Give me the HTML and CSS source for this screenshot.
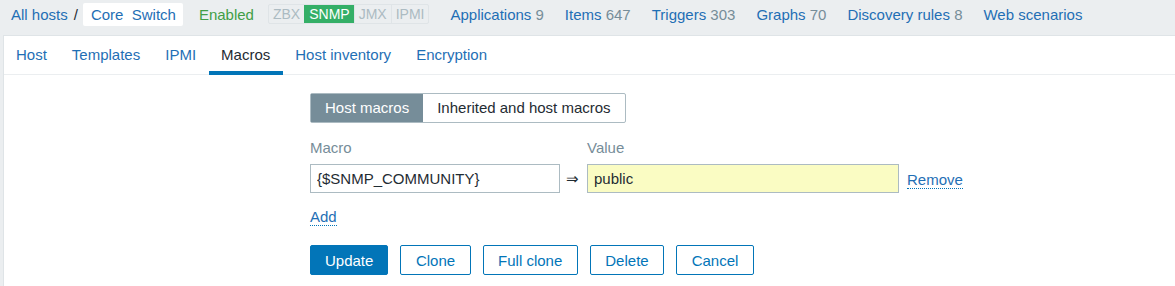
FILE: index.html
```html
<!DOCTYPE html>
<html lang="en">
<head>
    <meta charset="UTF-8">
    <title>Host macros</title>
    <link rel="stylesheet" href="styles.css">
</head>
<body>
    <div class="host-nav">
        <a class="crumb" href="#">All hosts</a>
        <span class="crumb-sep">/</span>
        <span class="crumb-current"><a href="#">Core&nbsp; Switch</a></span>
        <span class="status-enabled">Enabled</span>
        <span class="avail">
            <span class="avail-item">ZBX</span><span class="avail-item on">SNMP</span><span class="avail-item">JMX</span><span class="avail-item">IPMI</span>
        </span>
        <a class="nav-link" href="#">Applications <span class="count">9</span></a>
        <a class="nav-link" href="#">Items <span class="count">647</span></a>
        <a class="nav-link" href="#">Triggers <span class="count">303</span></a>
        <a class="nav-link" href="#">Graphs <span class="count">70</span></a>
        <a class="nav-link" href="#">Discovery rules <span class="count">8</span></a>
        <a class="nav-link" href="#">Web scenarios</a>
    </div>

    <div class="container">
        <ul class="tabs">
            <li class="tab">Host</li>
            <li class="tab">Templates</li>
            <li class="tab">IPMI</li>
            <li class="tab active">Macros</li>
            <li class="tab">Host inventory</li>
            <li class="tab">Encryption</li>
        </ul>

        <div class="form">
            <div class="toggle">
                <span class="toggle-item selected">Host macros</span>
                <span class="toggle-item">Inherited and host macros</span>
            </div>

            <div class="macro-table">
                <div class="col-label">Macro</div>
                <div></div>
                <div class="col-label">Value</div>
                <div></div>

                <input class="field macro" type="text" value="{$SNMP_COMMUNITY}">
                <span class="arrow">&rArr;</span>
                <input class="field value" type="text" value="public">
                <a class="dotted" href="#">Remove</a>
            </div>

            <a class="dotted add" href="#">Add</a>

            <div class="buttons">
                <button class="btn primary">Update</button>
                <button class="btn">Clone</button>
                <button class="btn">Full clone</button>
                <button class="btn">Delete</button>
                <button class="btn">Cancel</button>
            </div>
        </div>
    </div>
</body>
</html>
```

FILE: styles.css
```css
body {
    margin: 0;
    background-color: #ebeef0;
    font-family: "Liberation Sans", Arial, sans-serif;
    font-size: 15px;
    color: #1f2c33;
}
a {
    color: #1f6fb5;
    text-decoration: none;
}
.host-nav {
    display: flex;
    align-items: center;
    height: 28px;
    padding: 0 0 7px 11px;
}
.crumb-sep {
    margin: 0 5px 0 6px;
    color: #1f2c33;
}
.crumb-current {
    background-color: #fff;
    height: 23px;
    line-height: 23px;
    padding: 0 7px 0 8px;
    border-radius: 2px;
}
.status-enabled {
    color: #429e47;
    margin-left: 16px;
}
.avail {
    display: flex;
    margin-left: 14px;
    border: 1px solid #dfe4e7;
    border-radius: 2px;
    font-size: 14px;
}
.avail-item {
    color: #acbbc2;
    padding: 0 4px;
    line-height: 18px;
    border-left: 1px solid #dfe4e7;
}
.avail-item:first-child {
    border-left: none;
}
.avail-item.on {
    background-color: #34af67;
    color: #fff;
    border-left-color: #34af67;
}
.nav-link {
    margin-left: 21px;
}
.count {
    color: #768d99;
}
.container {
    margin-left: 3px;
    background-color: #fff;
    border-top: 1px solid #dfe4e7;
    border-left: 1px solid #dfe4e7;
    height: 250px;
}
.tabs {
    display: flex;
    list-style: none;
    margin: 0;
    padding: 0;
    height: 38px;
    border-bottom: 1px solid #ebeef0;
}
.tab {
    padding: 0 12.5px;
    line-height: 38px;
    color: #1f6fb5;
}
.tab:first-child {
    padding-left: 12px;
}
.tab.active {
    color: #1f2c33;
    box-shadow: inset 0 -4px 0 #0275b8;
    height: 39px;
}
.form {
    padding: 18px 0 0 306px;
}
.toggle {
    display: inline-flex;
    border: 1px solid #acbbc2;
    border-radius: 2px;
}
.toggle-item {
    line-height: 28px;
    padding: 0 14px;
}
.toggle-item.selected {
    background-color: #768d99;
    color: #fff;
}
.macro-table {
    display: grid;
    grid-template-columns: 250px 27px 312px auto;
    align-items: center;
    margin-top: 16px;
}
.col-label {
    color: #768d99;
    line-height: 17px;
    margin-bottom: 8px;
}
.field {
    box-sizing: border-box;
    height: 29px;
    border: 1px solid #acbbc2;
    padding: 0 6px;
    font-family: inherit;
    font-size: 15px;
    color: #1f2c33;
    outline: none;
}
.field.value {
    background-color: #fafcc3;
}
.arrow {
    text-align: center;
    font-size: 15px;
    padding-right: 2px;
}
.dotted {
    justify-self: start;
    margin-left: 8px;
    border-bottom: 1px dotted #0275b8;
    line-height: 16px;
    position: relative;
    top: 2px;
}
.add {
    display: inline-block;
    margin: 16px 0 0 0;
    top: 0;
}
.buttons {
    display: flex;
    gap: 12px;
    margin-top: 19px;
}
.btn {
    height: 30px;
    padding: 0 14.5px;
    background-color: #fff;
    border: 1px solid #0275b8;
    border-radius: 2px;
    color: #0275b8;
    font-family: inherit;
    font-size: 15px;
    cursor: pointer;
}
.btn.primary {
    background-color: #0275b8;
    color: #fff;
    padding: 0 14px;
}
```
